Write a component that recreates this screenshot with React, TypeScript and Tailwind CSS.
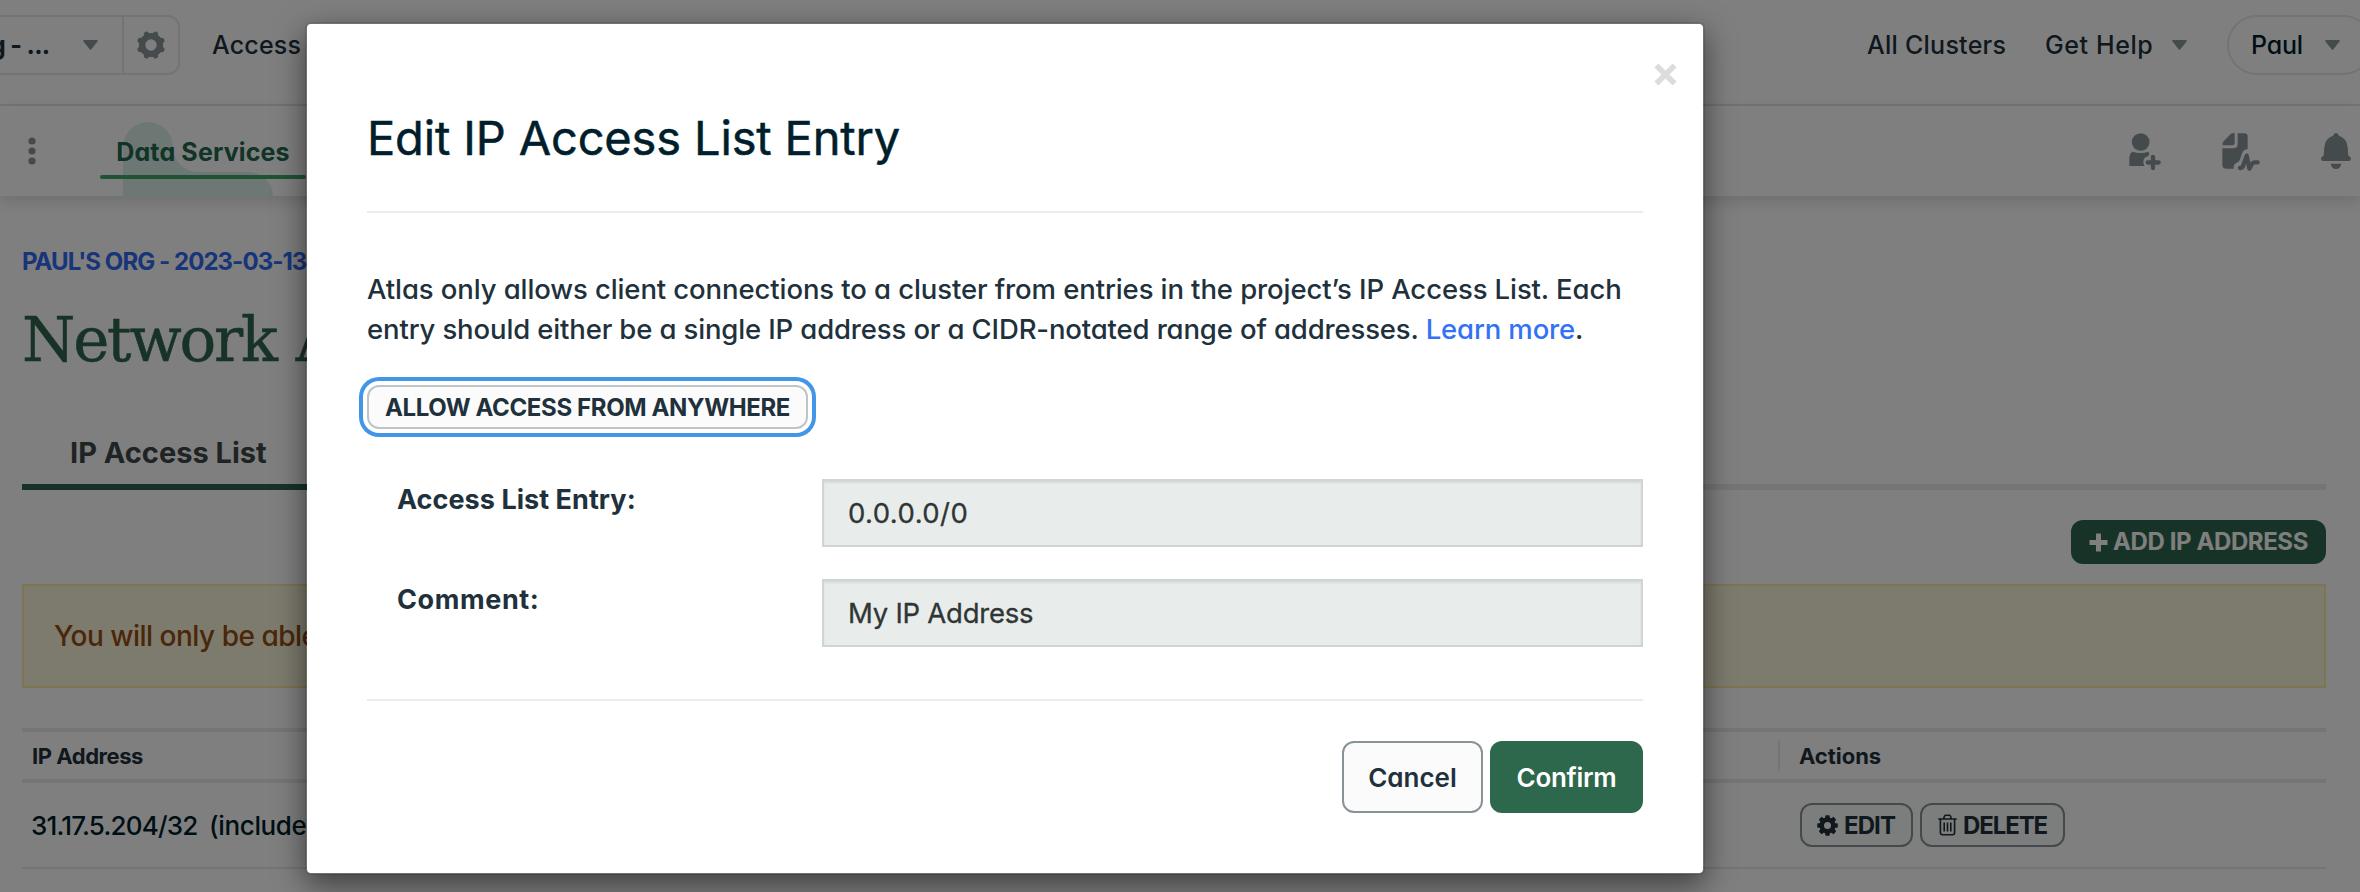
import type { ReactNode } from "react";

function Caret({ className = "" }: { className?: string }) {
  return (
    <svg className={`h-[10px] w-[15px] shrink-0 ${className}`} viewBox="0 0 15 10" fill="#8b9599">
      <path d="M1 0H14Q15.4 0.2 14.5 1.4L8.4 9.2Q7.5 10.2 6.6 9.2L0.5 1.4Q-0.4 0.2 1 0Z" />
    </svg>
  );
}

const octants = [0, 45, 90, 135, 180, 225, 270, 315];

function SettingsIcon() {
  return (
    <svg className="h-[28px] w-[28px]" viewBox="-14 -14 28 28" fill="#8b9599">
      <circle r="12.1" />
      {octants.map((a) => (
        <circle key={a} cx="0" cy="-11.8" r="2.6" transform={`rotate(${a + 22.5})`} />
      ))}
      <circle r="5.7" fill="#fff" />
    </svg>
  );
}

function CogIcon() {
  return (
    <svg className="h-[21px] w-[21px] shrink-0" viewBox="-10.5 -10.5 21 21" fill="#21313c">
      <circle r="8" />
      {octants.map((a) => (
        <path key={a} d="M-2.6 -7L-1.9 -10.3H1.9L2.6 -7Z" transform={`rotate(${a})`} />
      ))}
      <circle r="3.5" fill="#f9fbfa" />
    </svg>
  );
}

function TrashIcon() {
  return (
    <svg className="h-[22px] w-[19px] shrink-0" viewBox="0 0 19 22" fill="none" stroke="#21313c" strokeWidth="1.6">
      <path d="M0.3 5H18.7M5.6 4.8L6.6 2Q6.9 1.2 7.8 1.2H11.2Q12.1 1.2 12.4 2L13.4 4.8M2.4 5V18.6Q2.4 20.8 4.4 20.8H14.6Q16.6 20.8 16.6 18.6V5" />
      <path d="M6.2 8.6V17.4M9.5 8.6V17.4M12.8 8.6V17.4" />
    </svg>
  );
}

function InviteIcon() {
  return (
    <svg className="h-[40px] w-[36px]" viewBox="50 36 108 120" fill="#8b9599">
      <circle cx="91" cy="66" r="26.5" />
      <path d="M57 138V112Q58 99 68 95Q76 99 91 99Q105 99 112 95Q119 97 117 103L113 109Q99 113 99 126Q99 133 103 138Z" />
      <path d="M128 111V144M112 127.500H145" stroke="#8b9599" strokeWidth="13" strokeLinecap="round" />
    </svg>
  );
}

function ActivityIcon() {
  return (
    <svg className="h-[40px] w-[42px]" viewBox="330 36 126 120" fill="#8b9599">
      <path d="M374 40V70Q374 76 368 76H338V70Q338 67 341 64L361 43Q364 40 368 40Z" />
      <path d="M383 40H403Q413 40 413 50V88Q402 88 397 98L389 121Q387 126 380 128Q371 132 371 140V146H349Q337 146 337 134V85H370Q383 85 383 72Z" />
      <path
        d="M390 144Q397 144 399 138L410 107L418 146L426 131Q428 127 433 127H443"
        fill="none"
        stroke="#8b9599"
        strokeWidth="13"
        strokeLinecap="round"
        strokeLinejoin="round"
      />
    </svg>
  );
}

function BellIcon() {
  return (
    <svg className="h-[40px] w-[32px]" viewBox="630 36 96 120" fill="#8b9599">
      <path d="M678 39Q685 39 687 47Q711 55 713 82L715 107Q722 109 723 116Q723 123 716 123H640Q633 123 633 116Q634 109 641 107L643 82Q645 55 669 47Q671 39 678 39Z" />
      <path d="M662 131H694Q691 147 678 147Q665 147 662 131Z" />
    </svg>
  );
}

function SmallButton({ className, children }: { className: string; children: ReactNode }) {
  return (
    <button
      className={`flex h-[44px] items-center rounded-[12px] border-2 border-[#889397] bg-[#f9fbfa] text-[24px] font-bold leading-none text-[#21313c] ${className}`}
    >
      {children}
    </button>
  );
}

function TopBar() {
  return (
    <header className="flex h-[106px] items-start border-b-2 border-[#e6e8e8] pt-[15px] text-[25px] font-medium text-[#21313c]">
      <div className="flex h-[60px] w-[180px] items-center rounded-r-[12px] border-y-2 border-r-2 border-[#e6e8e8]">
        <span className="-ml-[10px] w-[93px] whitespace-nowrap pt-[2px] font-bold tracking-[-0.7px]">g - ...</span>
        <Caret />
        <div className="ml-[24px] flex h-full flex-1 items-center justify-center border-l-2 border-[#e6e8e8]">
          <SettingsIcon />
        </div>
      </div>
      <span className="ml-[32px] leading-[61px] tracking-[0.2px]">Access</span>
      <div className="ml-auto flex h-[60px] items-center">
        <span className="w-[178px] pt-[2px] tracking-[0.25px]">All Clusters</span>
        <span className="w-[127px] pt-[2px] tracking-[0.6px]">Get Help</span>
        <Caret />
        <div className="-mr-[13px] ml-[40px] flex h-[60px] w-[146px] items-center rounded-full border-2 border-[#e6e8e8] pl-[22px] text-[#001e2b]">
          <span className="w-[74px] pt-[2px] tracking-[-0.2px]">Paul</span>
          <Caret />
        </div>
      </div>
    </header>
  );
}

function ServiceNav() {
  return (
    <nav className="relative flex h-[90px] items-center shadow-[0_6px_14px_rgba(0,30,43,0.14)]">
      <svg className="absolute left-[123px] top-[16px] h-[74px] w-[150px]" viewBox="0 0 150 74" fill="#daf1e8">
        <path d="M0 74V25A25 25 0 0 1 50 25A25 25 0 0 0 75 50H125A25 24 0 0 1 150 74Z" />
      </svg>
      <svg className="ml-[28px] h-[28px] w-[8px]" viewBox="0 0 8 28" fill="#8b9599">
        <circle cx="4" cy="4" r="3.6" />
        <circle cx="4" cy="14" r="3.6" />
        <circle cx="4" cy="24" r="3.6" />
      </svg>
      <div className="relative ml-[64px] flex h-[90px] w-[206px] flex-col items-center">
        <span className="mt-[26px] text-[25px] font-bold leading-[40px] tracking-[0.15px] text-[#23684f]">Data Services</span>
        <span className="mt-[3px] h-[4px] w-full rounded-full bg-[#3ea666]" />
      </div>
      <div className="ml-auto flex items-center pr-[8px] pt-[2px]">
        <InviteIcon />
        <span className="w-[57px]" />
        <ActivityIcon />
        <span className="w-[58px]" />
        <BellIcon />
      </div>
    </nav>
  );
}

function NetworkAccess() {
  return (
    <main className="flex flex-col pl-[22px] pr-[34px] pt-[46px]">
      <span className="whitespace-nowrap text-[24px] font-bold leading-[40px] tracking-[-0.95px] text-[#2e6af0]">PAUL'S ORG - 2023-03-13</span>
      <h1 className="mt-[18px] whitespace-nowrap font-[DejaVu_Serif,serif] text-[61px] leading-[80px] tracking-[-2.2px] text-[#2f664e] [-webkit-text-stroke:0.5px_#2f664e] [word-spacing:3px]">
        Network Access
      </h1>
      <div className="mt-[44px] flex border-b-[6px] border-[#e8edeb]">
        <div className="-mb-[6px] flex h-[66px] w-[294px] items-center border-b-[6px] border-[#2f664e] pb-[4px] pl-[48px]">
          <span className="text-[29px] font-bold leading-none text-[#404749]">IP Access List</span>
        </div>
      </div>
      <button className="mt-[30px] flex h-[44px] w-[255px] items-center gap-[5px] self-end rounded-[12px] bg-[#2f664e] pl-[18px] text-[24px] font-bold leading-none text-white">
        <svg className="h-[19px] w-[19px] shrink-0" viewBox="0 0 19 19">
          <path d="M9.500 0.500V18.500M0.500 9.500H18.500" stroke="#fff" strokeWidth="5" strokeLinejoin="round" />
        </svg>
        <span className="whitespace-nowrap tracking-[-0.4px]">ADD IP ADDRESS</span>
      </button>
      <div className="mt-[20px] flex h-[104px] items-center border-2 border-[#fbe8a0] bg-[#fbf6da] pl-[30px] text-[28px] font-medium tracking-[-0.5px] text-[#944f14]">
        You will only be able
      </div>
      <div className="mt-[40px] flex h-[55px] items-center border-y-4 border-[#e6eceb] text-[22px] font-bold text-[#21313c]">
        <span className="w-[1756px] pl-[10px] pt-[2px] tracking-[-0.45px]">IP Address</span>
        <span className="h-[31px] border-l-2 border-[#e8edeb] pl-[19px] leading-[33px] tracking-[-0.05px]">Actions</span>
      </div>
      <div className="flex h-[86px] items-center border-b-2 border-[#e6eaea] text-[26px] font-medium text-[#001e2b]">
        <span className="w-[177px] pl-[9px] tracking-[-0.8px]">31.17.5.204/32</span>
        <span className="w-[1601px] pl-[10px] tracking-[-0.35px]">(includes</span>
        <SmallButton className="w-[113px] gap-[6px] pl-[15px] tracking-[-0.9px]">
          <CogIcon />
          <span className="pt-[2px]">EDIT</span>
        </SmallButton>
        <SmallButton className="ml-[7px] w-[145px] gap-[6px] pl-[16px] tracking-[-1.1px]">
          <TrashIcon />
          <span className="pt-[2px]">DELETE</span>
        </SmallButton>
      </div>
    </main>
  );
}

function Field({ label, value, labelClass, valueClass }: { label: string; value: string; labelClass: string; valueClass: string }) {
  return (
    <div className="flex h-[68px]">
      <span className={`w-[455px] pl-[30px] text-[27px] font-bold leading-[42px] text-[#21313c] ${labelClass}`}>{label}</span>
      <div
        className={`flex flex-1 items-center border-2 border-[#cfd5d3] bg-[#e8edeb] pl-[24px] pt-[2px] text-[27.5px] leading-none text-[#303535] shadow-[inset_0_2px_2px_rgba(0,0,0,0.075)] [-webkit-text-stroke:0.3px_#303535] ${valueClass}`}
      >
        {value}
      </div>
    </div>
  );
}

function EditDialog() {
  return (
    <div role="dialog" className="relative flex h-[853px] w-[1400px] flex-col rounded-[6px] border-2 border-black/10 bg-white bg-clip-padding px-[60px] shadow-[0_10px_30px_rgba(0,0,0,0.5)]">
      <button className="absolute right-[26px] top-[39px]">
        <svg className="h-[23px] w-[23px]" viewBox="0 0 23 23" stroke="#dadcdd" strokeWidth="5.6">
          <path d="M2.400 2.400L20.600 20.600M20.600 2.400L2.400 20.600" />
        </svg>
      </button>
      <h2 className="mt-[84px] text-[47px] leading-[60px] tracking-[-0.15px] text-[#001e2b] [-webkit-text-stroke:0.5px_#001e2b]">
        Edit IP Access List Entry
      </h2>
      <hr className="mt-[43px] border-t-2 border-[#ebedec]" />
      <p className="mt-[56px] whitespace-nowrap text-[27.5px] font-medium leading-[40px] text-[#21313c]">
        <span className="block tracking-[-0.1px]">
          Atlas only allows client connections to a cluster from entries in the project’s IP Access List. Each
        </span>
        <span className="block tracking-[-0.14px]">
          entry should either be a single IP address or a CIDR-notated range of addresses. <a className="text-[#3372f6]">Learn more</a>.
        </span>
      </p>
      <button className="mt-[36px] flex h-[44px] w-[441px] items-center justify-center self-start whitespace-nowrap rounded-[12px] border-2 border-[#bfc5c6] bg-[#fbfbfb] pt-[2px] text-[24px] font-bold leading-none tracking-[-0.38px] text-[#21313c] shadow-[0_0_0_4px_#fff,0_0_0_8px_#4296e8]">
        ALLOW ACCESS FROM ANYWHERE
      </button>
      <div className="mt-[50px] flex flex-col gap-[32px]">
        <Field label="Access List Entry:" value="0.0.0.0/0" labelClass="tracking-[0.05px]" valueClass="tracking-[0.45px]" />
        <Field label="Comment:" value="My IP Address" labelClass="tracking-[0.6px]" valueClass="tracking-[-0.25px]" />
      </div>
      <hr className="mt-[52px] border-t-2 border-[#ebedec]" />
      <div className="mt-[40px] flex justify-end gap-[7px] text-[26px] font-semibold leading-none">
        <button className="h-[72px] w-[141px] rounded-[12px] border-2 border-[#889397] bg-[#fbfbfb] pt-[2px] text-[#21313c]">Cancel</button>
        <button className="h-[72px] w-[153px] rounded-[12px] bg-[#2d674c] pt-[2px] tracking-[-0.3px] text-white">Confirm</button>
      </div>
    </div>
  );
}

export default function App() {
  return (
    <div className="relative h-[892px] w-[2360px] overflow-hidden bg-white font-[Inter,sans-serif] [font-feature-settings:'cv11']">
      <TopBar />
      <ServiceNav />
      <NetworkAccess />
      <div className="absolute inset-0 bg-black/50 pl-[305px] pt-[22px]">
        <EditDialog />
      </div>
    </div>
  );
}
